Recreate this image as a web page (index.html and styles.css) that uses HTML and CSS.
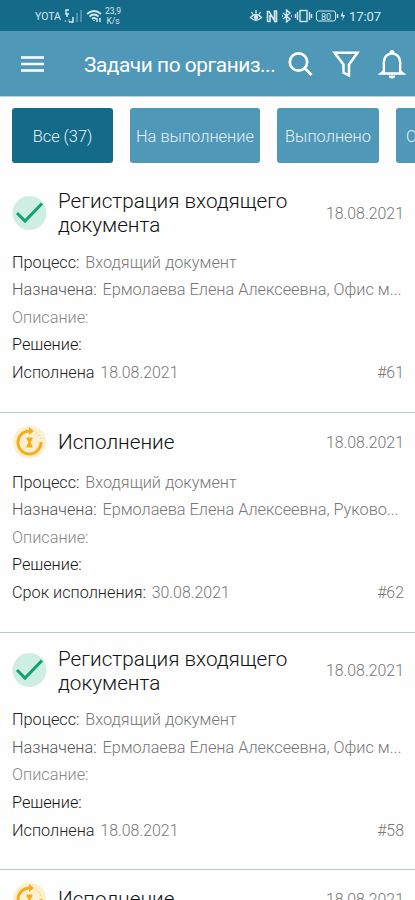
FILE: index.html
```html
<!DOCTYPE html>
<html lang="ru">
<head>
<meta charset="utf-8">
<title>Задачи по организации</title>
<link rel="stylesheet" href="styles.css">
</head>
<body>
<svg class="defs" width="0" height="0">
  <symbol id="done" viewBox="0 0 35 35"><circle cx="17.5" cy="17" r="17" fill="#cfeee3"/><path d="M5 17 13 25 30 7.500" fill="none" stroke="#0fa36f" stroke-width="3"/></symbol>
  <symbol id="wait" viewBox="0 0 35 35"><circle cx="17.500" cy="17" r="16.500" fill="#fdf0d0"/><path d="M19 6A11.500 11.500 0 1 0 29 17" fill="none" stroke="#f7ac1c" stroke-width="3"/><path d="M17 2 22 6 17 10Z" fill="#f7ac1c"/><path d="M14.500 12.500H20.500V14L18.500 17.500 20.500 21V22.500H14.500V21L16.500 17.500 14.500 14Z" fill="#f7ac1c"/><path d="M24 8Q28 10 29 15" fill="none" stroke="#f9cf7a" stroke-width="1.300" stroke-dasharray="1.300 2"/></symbol>
</svg>
<div class="status">
  <span class="carrier">YOTA</span>
  <svg class="signal" width="20" height="15" viewBox="0 0 20 15" fill="none" stroke="#d5e8ef"><path d="M5 1H2V5H5M3 5V8" stroke-width="1.500"/><path d="M1.500 11v2M5 10v3" stroke-width="1.500" opacity=".5"/><path d="M9 8v5H5" stroke-width="1.500"/><path d="M13 4v9M17 1v12" stroke-width="2" opacity=".3"/></svg>
  <svg class="wifi" width="16" height="14" viewBox="0 0 16 14" fill="none" stroke="#d5e8ef" stroke-width="1.700"><path d="M1 5Q8-1 15 5M3.500 7.500Q8 3.500 12.500 7.500M6 10Q8 8 10 10"/><path d="M8 11v1M11 9v4M14 9v4" stroke-width="1.500"/></svg>
  <span class="speed">23,9<br>K/s</span>
  <svg class="sys" width="98" height="14" viewBox="0 0 98 14" fill="none" stroke="#d5e8ef" stroke-width="1.400"><path d="M1.500 8.500Q7 2.500 12.500 8.500Q7 14 1.500 8.500ZM7 1v3.500M2.500 3l1.500 2.500M11.500 3l-1.500 2.500"/><circle cx="7" cy="8.300" r="1.500" fill="#d5e8ef"/><path d="M18.500 12.500V2.500H20L25.500 11.500V2H27.500V12.500H25M18.500 12.500H21V6" stroke-width="1.600"/><path d="M34 4 41 10 37.500 13V1L41 4 34 10M33 7h1M42 7h1"/><rect x="51" y="1.500" width="7" height="11"/><path d="M48.500 3v8M60.500 3v8M46.500 5v4M62.500 5v4"/><rect x="67.500" y="2" width="19" height="10" rx="2" stroke-width="1"/><path d="M88.500 5v4"/><path d="M94 2 91.500 7.500H94L93 12 96 6H94Z" fill="#d5e8ef" stroke="none"/><text x="77" y="10.500" text-anchor="middle" class="battery">80</text></svg>
  <span class="clock">17:07</span>
</div>
<header class="bar">
  <svg width="24" height="18" viewBox="0 0 24 18"><path d="M0 2.500H23M0 9H23M0 15.500H23" stroke="#fff" stroke-width="2.300"/></svg>
  <h1>Задачи по организ...</h1>
  <svg class="search" width="26" height="26" viewBox="0 0 26 26" fill="none" stroke="#fff" stroke-width="2.700"><circle cx="10.500" cy="11" r="8.700"/><path d="M16.500 17 23.500 24"/></svg>
  <svg class="filter" width="28" height="26" viewBox="0 0 28 26" fill="none" stroke="#fff" stroke-width="2.500"><path d="M2.500 1.700H25.500L17 13.500V24.500L11.500 21.500V13.500Z"/></svg>
  <svg class="bell" width="28" height="30" viewBox="0 0 28 30"><path d="M5.800 22.500V13.500C5.800 8 9.500 4.500 14 4.500S22.200 8 22.200 13.500V22.500L25 24.500H3Z" fill="none" stroke="#fff" stroke-width="2.400"/><path d="M11.500 4a2.500 3 0 0 1 5 0ZM10.800 26.500h6.400a3.200 3 0 0 1-6.400 0Z" fill="#fff"/></svg>
</header>
<nav class="chips">
  <span class="chip all">Все (37)</span><span class="chip todo">На выполнение</span><span class="chip ready">Выполнено</span><span class="chip more">О</span>
</nav>
<main>
  <article class="card">
    <div class="head"><svg class="state"><use href="#done"/></svg><h2>Регистрация входящего документа</h2><time>18.08.2021</time></div>
    <p><b>Процесс:</b> Входящий документ</p>
    <p class="who"><b>Назначена:</b> Ермолаева Елена Алексеевна, Офис м...</p>
    <p class="desc">Описание:</p>
    <p class="res">Решение:</p>
    <p class="last"><span><b>Исполнена</b> <i>18.08.2021</i></span><i>#61</i></p>
  </article>
  <article class="card">
    <div class="head"><svg class="state"><use href="#wait"/></svg><h2>Исполнение</h2><time>18.08.2021</time></div>
    <p><b>Процесс:</b> Входящий документ</p>
    <p class="who"><b>Назначена:</b> Ермолаева Елена Алексеевна, Руково...</p>
    <p class="desc">Описание:</p>
    <p class="res">Решение:</p>
    <p class="last"><span><b>Срок исполнения:</b> <i>30.08.2021</i></span><i>#62</i></p>
  </article>
  <article class="card">
    <div class="head"><svg class="state"><use href="#done"/></svg><h2>Регистрация входящего документа</h2><time>18.08.2021</time></div>
    <p><b>Процесс:</b> Входящий документ</p>
    <p class="who"><b>Назначена:</b> Ермолаева Елена Алексеевна, Офис м...</p>
    <p class="desc">Описание:</p>
    <p class="res">Решение:</p>
    <p class="last"><span><b>Исполнена</b> <i>18.08.2021</i></span><i>#58</i></p>
  </article>
  <article class="card">
    <div class="head"><svg class="state"><use href="#wait"/></svg><h2>Исполнение</h2><time>18.08.2021</time></div>
  </article>
</main>
</body>
</html>
```
FILE: styles.css
```css
* { box-sizing: border-box; }
html, body { height: 900px; overflow: hidden; }
body { margin: 0; background: #fefefe; font-family: Roboto, sans-serif; font-weight: 300; color: #777; }
svg { display: block; flex: none; }
.defs { position: absolute; }
.status { height: 31px; background: #146a89; color: #d5e8ef; display: flex; align-items: center; padding: 1px 33px 0 35px; }
.carrier { font-size: 10.5px; font-weight: 400; width: 29px; }
.wifi { margin-left: 2px; }
.speed { font-size: 8.5px; line-height: 10px; font-weight: 400; text-align: center; width: 18px; margin-left: 2px; white-space: nowrap; }
.sys { margin-left: auto; }
.battery { font: 400 9px Roboto, sans-serif; fill: #d5e8ef; stroke: none; }
.clock { font-size: 13px; font-weight: 400; margin-left: 2px; width: 33px; white-space: nowrap; letter-spacing: -.1px; }
.bar { height: 66px; background: #5098b8; border-bottom: 1px solid #b4d6e2; display: flex; align-items: center; padding: 0 9px 0 21px; }
h1 { margin: 3px 0 0 39px; font-size: 20.8px; line-height: 28px; font-weight: 400; letter-spacing: -.42px; color: #fff; width: 204px; white-space: nowrap; }
.filter { margin-left: 18px; }
.bell { margin-left: auto; }
.chips { display: flex; height: 66px; padding: 11px 0 0 12px; gap: 17px; overflow: hidden; }
.chip { flex: none; height: 55px; border-radius: 3px; background: #5098b8; color: #e4f1f6; font-size: 16.4px; padding-top: 1px; display: flex; align-items: center; justify-content: center; white-space: nowrap; }
.all { width: 101px; background: #146a89; }
.todo { width: 130px; }
.ready { width: 102px; }
.more { width: 102px; justify-content: flex-start; padding-left: 10px; }
.card { padding: 14px 11px 25px 12px; border-bottom: 1px solid #b5cccd; }
.card:first-child { padding-top: 26px; }
.head { display: flex; align-items: center; min-height: 31px; margin-bottom: 11px; }
.state { width: 35px; height: 35px; margin: -2px 11px -2px 0; }
h2 { margin: 0; flex: 1; font-size: 20.7px; line-height: 24.3px; font-weight: 300; color: #111; }
time { font-size: 15.9px; color: #777; }
p { margin: 0; font-size: 16.25px; line-height: 27.6px; white-space: nowrap; }
p b { font-weight: 300; color: #222; margin-right: 1.8px; }
p i { font-style: normal; font-size: 15.9px; }
.who b { color: #555; }
.desc { color: #888; }
.res { color: #111; }
.last { display: flex; justify-content: space-between; }
```
